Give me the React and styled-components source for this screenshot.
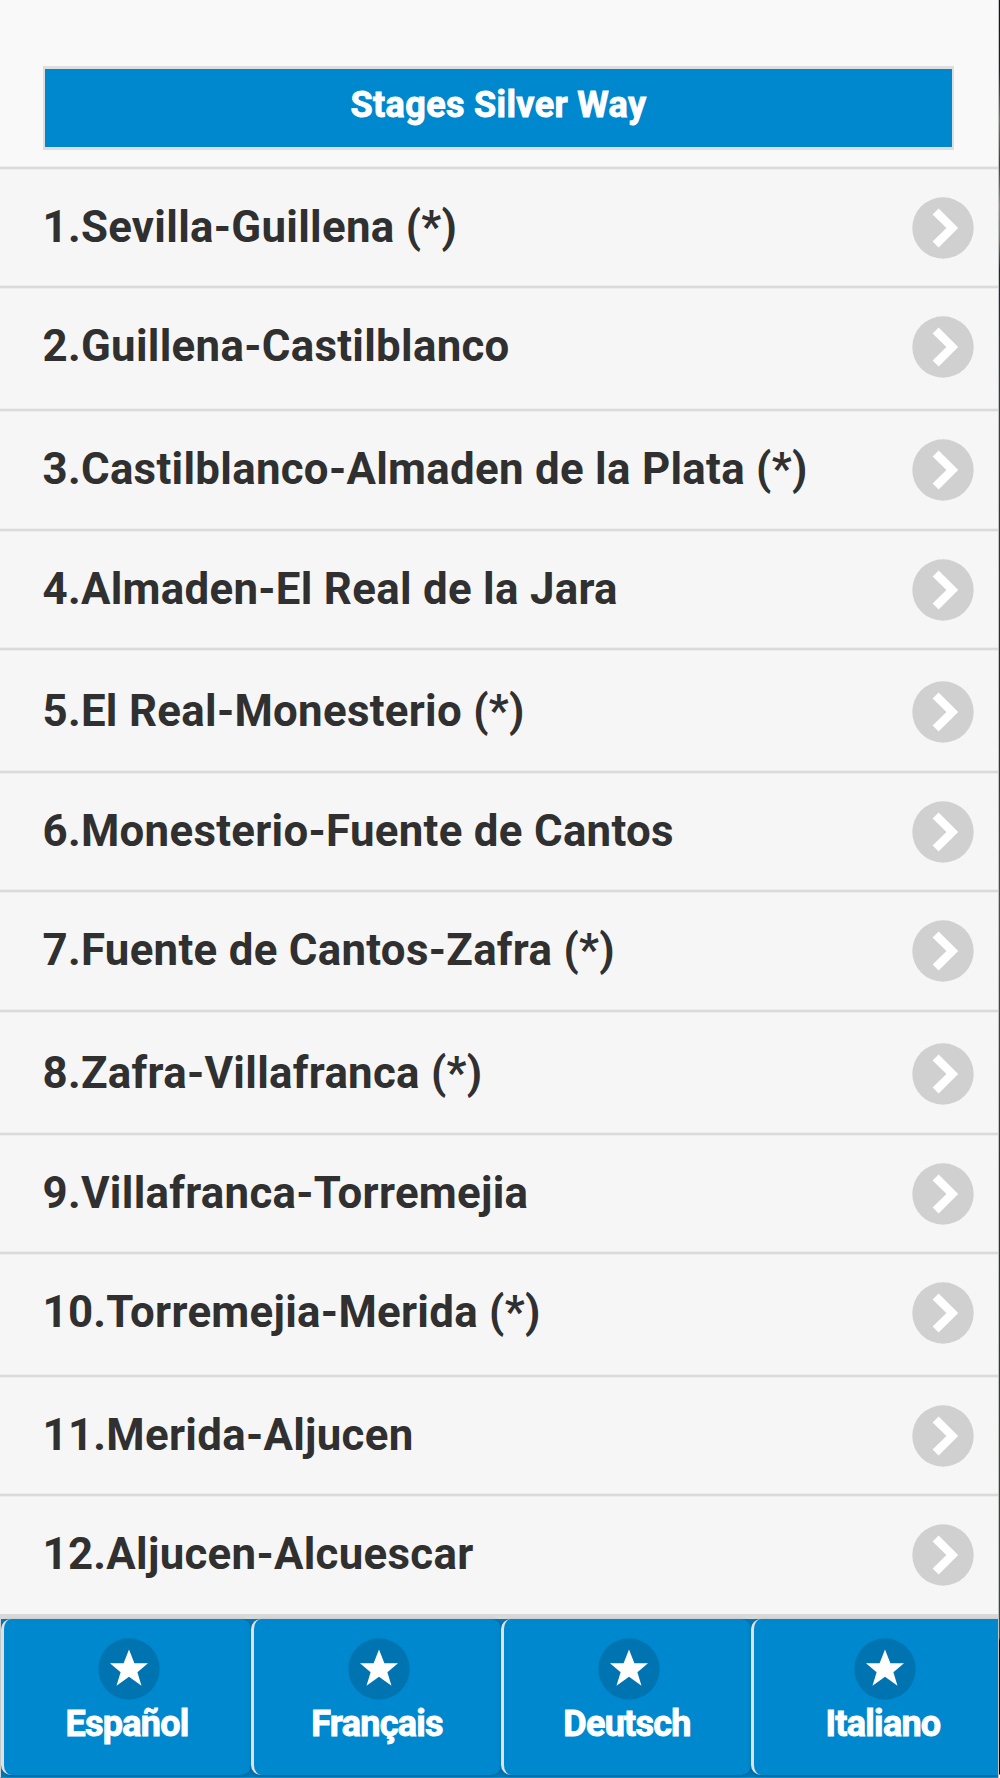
import styled, { createGlobalStyle } from "styled-components";

const GlobalStyle = createGlobalStyle`
    body {
        margin: 0;
        background-color: #f9f9f9;
        font-family: Roboto, "Liberation Sans", sans-serif;
    }
    * {
        box-sizing: border-box;
    }
`;

const Screen = styled.div`
    display: flex;
    width: 1000px;
    height: 1778px;
    overflow: hidden;
`;

const Page = styled.div`
    width: 998px;
    flex: none;
    display: flex;
    flex-direction: column;
    background-color: #f9f9f9;
`;

const Edge = styled.div`
    width: 2px;
    border-left: 1px solid #c4c6c6;
    background: linear-gradient(#101516 0, #1d2425 70px, #6f756b 120px, #38433f 165px, #8d8b7b 205px, #7b6f63 240px, #122b30 270px, #35403d 420px, #202a2b 700px, #46504a 900px, #263130 1200px, #3c4a3d 1638px, #000000 1641px, #000000 1774px, #ffffff 1775px);
`;

const Header = styled.header`
    height: 167px;
    flex: none;
    padding: 66px 44px 0 43px;
`;

const Title = styled.h1`
    margin: 0;
    height: 84px;
    border: solid #dfdddd;
    border-width: 3px 2px;
    background-color: #0088ce;
    color: #ffffff;
    font-size: 36px;
    font-weight: 700;
    line-height: 72px;
    letter-spacing: 0.35px;
    text-align: center;
    -webkit-text-stroke: 0.9px #ffffff;
`;

const List = styled.ul`
    margin: 0;
    padding: 0;
    list-style: none;
    flex: none;
`;

const Row = styled.li`
    display: flex;
    align-items: center;
    justify-content: space-between;
    height: ${(props) => props.$height}px;
    padding: ${(props) => props.$top || 0}px 24px ${(props) => props.$bottom || 0}px 43px;
    border-top: 2px solid #dadada;
    background-color: #f6f6f6;
    box-shadow: inset 0 1px #ededed, 0 -1px #ededed;
`;

const Name = styled.span`
    color: #303030;
    font-size: 43.8px;
    font-weight: 700;
    line-height: 50px;
    letter-spacing: 0.3px;
    white-space: nowrap;
    padding-bottom: 2px;
    margin-left: -0.5px;
`;

const Arrow = styled.svg`
    display: block;
    width: 62px;
    height: 62px;
    flex: none;
`;

const Footer = styled.footer`
    flex: 1;
    display: flex;
    border-top: 5px solid #d9d9d9;
    border-left: 1px solid #d0d8dc;
    border-bottom: 1px solid #1a8dcb;
    background-color: #0079b8;
`;

const Tab = styled.a`
    width: ${(props) => props.$width}px;
    height: 156px;
    flex: none;
    display: flex;
    flex-direction: column;
    align-items: center;
    padding-top: 19px;
    padding-left: ${(props) => props.$shift || 0}px;
    border-left: 3px solid #e0e0e0;
    border-radius: ${(props) => (props.$last ? "10px 0 0 10px" : "10px")};
    background-color: #0088ce;
    color: #ffffff;
    box-shadow: 0 1px 4px rgba(0, 0, 0, 0.18);
`;

const Star = styled.svg`
    display: block;
    width: 62px;
    height: 62px;
    margin-left: 2px;
`;

const Label = styled.span`
    font-size: 36px;
    font-weight: 700;
    line-height: 42px;
    letter-spacing: -0.75px;
    margin-top: 3px;
    margin-left: -1px;
    -webkit-text-stroke: 0.9px #ffffff;
`;

const stages = [
    { name: "1.Sevilla-Guillena (*)", height: 119 },
    { name: "2.Guillena-Castilblanco", height: 123, bottom: 3 },
    { name: "3.Castilblanco-Almaden de la Plata (*)", height: 120 },
    { name: "4.Almaden-El Real de la Jara", height: 119 },
    { name: "5.El Real-Monesterio (*)", height: 123, top: 3 },
    { name: "6.Monesterio-Fuente de Cantos", height: 119 },
    { name: "7.Fuente de Cantos-Zafra (*)", height: 120 },
    { name: "8.Zafra-Villafranca (*)", height: 123, top: 3 },
    { name: "9.Villafranca-Torremejia", height: 119 },
    { name: "10.Torremejia-Merida (*)", height: 123, bottom: 3 },
    { name: "11.Merida-Aljucen", height: 119 },
    { name: "12.Aljucen-Alcuescar", height: 120 },
];

const languages = [
    { name: "Español", width: 250 },
    { name: "Français", width: 250 },
    { name: "Deutsch", width: 250 },
    { name: "Italiano", width: 247, shift: 15, last: true },
];

function App() {
    return (
        <Screen>
            <GlobalStyle />
            <Page>
                <Header>
                    <Title>Stages Silver Way</Title>
                </Header>
                <List>
                    {stages.map((stage) => (
                        <Row key={stage.name} $height={stage.height} $top={stage.top} $bottom={stage.bottom}>
                            <Name>{stage.name}</Name>
                            <Arrow viewBox="0 0 62 62">
                                <circle cx="31" cy="31" r="30.7" fill="#d0d0d0" />
                                <path d="M26.6 11.4 L46.2 31 L26.6 50.6 L20.6 44.6 L34.4 31 L20.6 17.4 Z" fill="#ffffff" />
                            </Arrow>
                        </Row>
                    ))}
                </List>
                <Footer>
                    {languages.map((language) => (
                        <Tab key={language.name} $width={language.width} $shift={language.shift} $last={language.last}>
                            <Star viewBox="0 0 62 62">
                                <circle cx="31" cy="31" r="30.7" fill="#0074b0" />
                                <path d="M31 11.5 L36.4 25.2 H50 L39.4 34.3 L43.5 47.8 L31 38.8 L18.5 47.8 L22.6 34.3 L12 25.2 H25.6 Z" fill="#ffffff" />
                            </Star>
                            <Label>{language.name}</Label>
                        </Tab>
                    ))}
                </Footer>
            </Page>
            <Edge />
        </Screen>
    );
}

export default App;
